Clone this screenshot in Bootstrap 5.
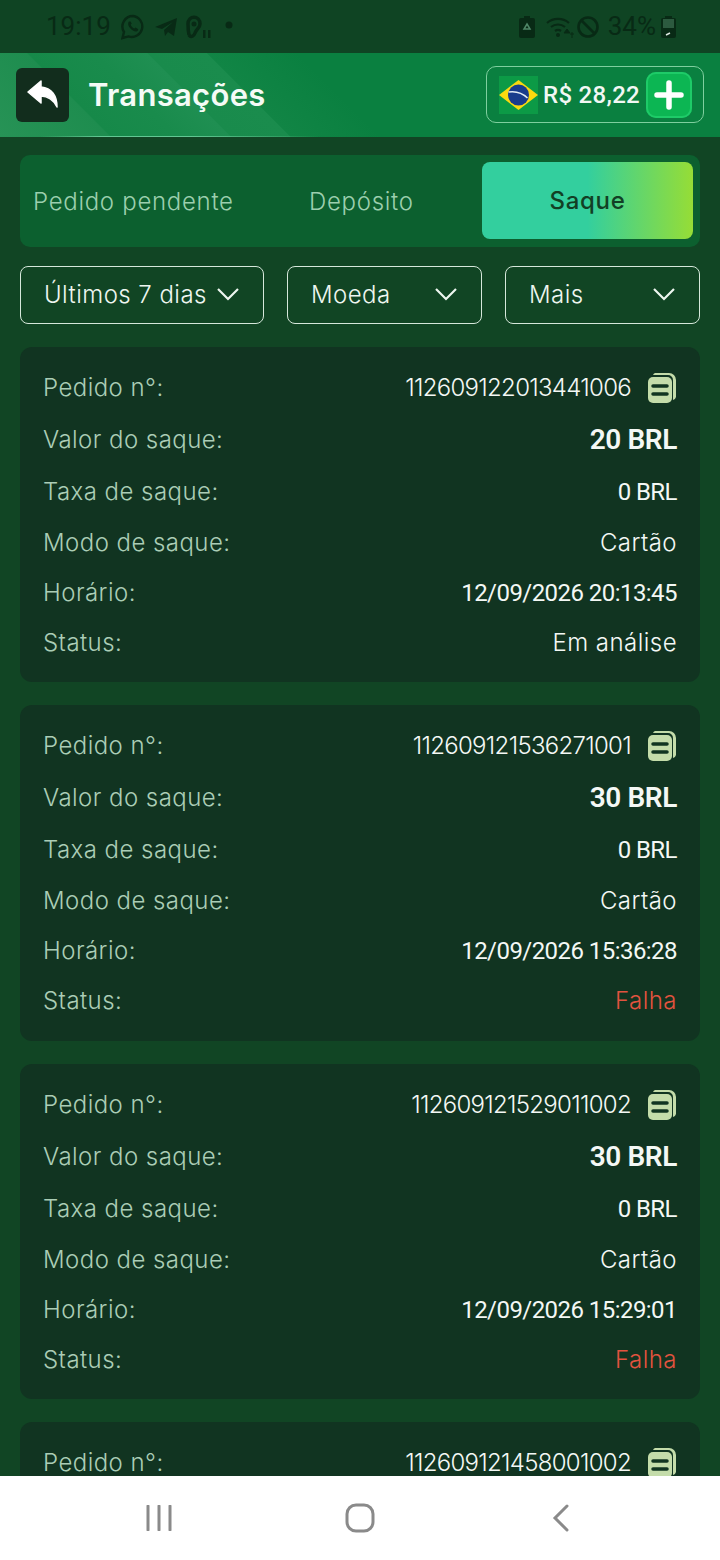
<!DOCTYPE html>
<html lang="pt-BR">
<head>
    <meta charset="UTF-8">
    <meta name="viewport" content="width=device-width, initial-scale=1">
    <title>Transações</title>
    <link href="https://cdn.jsdelivr.net/npm/bootstrap@5.3.0/dist/css/bootstrap.min.css" rel="stylesheet">
    <style>
        html, body { height: 1560px; overflow: hidden; }
        body { background: #114524; font-family: Inter, "Noto Sans", sans-serif; }
        .app-shell { height: 1560px; overflow: hidden; }
        .status-strip { height: 53px; background: #0f4423; padding: 0 44px 0 46px; color: #082a15; font-family: Roboto, sans-serif; font-size: 26px; }
        .status-strip svg { display: block; }
        .top-head { height: 84px; padding: 0 16px; background:
            linear-gradient(90deg, transparent 40px, #62c793 100px, #62c793 190px, transparent 320px) left bottom / 100% 1px no-repeat,
            linear-gradient(45deg, #279356 0, #1e8d4f 78px, #168949 79px, #198b4c 125px, #1f8f52 163px, #198b4c 164px, #1a8c4d 205px, #118545 206px, #0a8040 270px, #0a8040 100%); }
        .back-box { width: 53px; height: 54px; background: #122d1d; border-radius: 6px; }
        .head-title { font-size: 31px; font-weight: 600; color: #f4fbf6; margin-left: 19px; letter-spacing: .3px; }
        .wallet { width: 218px; height: 57px; margin-bottom: 1px; border: 1px solid #7fcf9f; border-radius: 10px; padding: 0 11px 0 12px; }
        .wallet-val { font-family: Roboto, sans-serif; font-weight: 500; font-size: 24px; color: #f2f8f4; margin-left: 5px; letter-spacing: .3px; }
        .plus-box { width: 46px; height: 46px; border-radius: 10px; background: #0cb653; box-shadow: inset 0 0 0 2px #1ecb68; margin-left: auto; }
        .list-area { padding: 18px 20px 0; }
        .tab-strip { height: 92px; background: #0c602f; border-radius: 10px; padding: 7px 7px 8px 13px; }
        .tab-item { font-size: 24px; font-weight: 300; color: #9ccfae; letter-spacing: .7px; }
        .tab-off { padding-top: 2px; }
        .tab-one { width: 276px; }
        .tab-on { width: 211px; height: 77px; border-radius: 8px; background: linear-gradient(90deg, #33cf9e 0, #33cf9e 50%, #96dd36 100%); color: #123f25; font-weight: 500; }
        .drop-row { margin-top: 19px; gap: 23px; }
        .drop-box { height: 58px; border: 1px solid #d6e8db; border-radius: 8px; padding: 0 23px; color: #eef6f0; font-size: 24px; font-weight: 300; letter-spacing: .45px; background: transparent; }
        .drop-first { width: 244px; }
        .drop-other { width: 195px; }
        .drop-box svg { margin-top: -3px; }
        .tx-card { height: 335.4px; margin-top: 23px; background: #113421; border-radius: 12px; border: 0; padding: 15px 23px 0; color: #f4f8f5; }
        .tx-line { height: 50px; font-size: 24px; font-weight: 300; letter-spacing: .45px; }
        .tx-line.tall { height: 52px; }
        .tx-lab { color: #abcdb6; }
        .tx-id { letter-spacing: -.7px; }
        .tx-num { font-family: Roboto, sans-serif; font-weight: 400; font-size: 24px; letter-spacing: -.55px; }
        .tx-big { font-family: Roboto, sans-serif; font-weight: 600; font-size: 28px; letter-spacing: -.4px; }
        .tx-fail { color: #e2533f; }
        .bottom-nav { height: 84px; background: #fff; flex-shrink: 0; }
        .nav-slot { width: 201px; }
    </style>
</head>
<body>
<div class="app-shell d-flex flex-column">

    <div class="status-strip d-flex align-items-center justify-content-between flex-shrink-0">
        <div class="d-flex align-items-center">
            <span>19:19</span>
            <svg width="24" height="26" viewBox="0 0 24 26" style="margin-left:10px"><path d="M12 2a10.500 10.500 0 0 0-9 16l-1.500 6 6-1.600A10.500 10.500 0 1 0 12 2z" fill="none" stroke="#082a15" stroke-width="2.400"/><path d="M8 7.500c-1.500 1.500-1 4 1 6.500s5 4 6.500 3.500 2-2 1.500-2.500l-2.500-1.500-1.200 1c-1.500-.5-3-2.200-3.600-3.800l1-1.200L9.500 7.500z" fill="#082a15"/></svg>
            <svg width="24" height="22" viewBox="0 0 24 22" style="margin-left:9px"><path d="M1 11 23 2l-3 18-6-4-3 4-1-6 9-8-11 7z" fill="#082a15"/></svg>
            <svg width="26" height="26" viewBox="0 0 26 26" style="margin-left:7px"><path d="M4 21c2 3 5 1 6-2 1-4 5-5 5-9 0-9-12-9-12 0 0 3 0 6 1 11" fill="none" stroke="#082a15" stroke-width="3.500"/><circle cx="9" cy="10" r="2.500" fill="#082a15"/><rect x="18" y="16" width="2.500" height="8" fill="#082a15"/><rect x="23" y="16" width="2.500" height="8" fill="#082a15"/></svg>
            <svg width="8" height="8" style="margin-left:14px;margin-top:-4px"><circle cx="4" cy="4" r="3.500" fill="#082a15"/></svg>
        </div>
        <div class="d-flex align-items-center">
            <svg width="16" height="22" viewBox="0 0 16 22"><path d="M5 0h6v2h3a2 2 0 0 1 2 2v16a2 2 0 0 1-2 2H2a2 2 0 0 1-2-2V4a2 2 0 0 1 2-2h3z" fill="#082a15"/><path d="M8 8l3 5H5z" fill="none" stroke="#4f8767" stroke-width="1.500"/></svg>
            <svg width="30" height="24" viewBox="0 0 30 24" style="margin-left:11px"><path d="M1 8a17 17 0 0 1 22 0M5 12a11 11 0 0 1 14 0M9 16a5 5 0 0 1 6 0" fill="none" stroke="#082a15" stroke-width="2.200"/><circle cx="12" cy="20" r="2" fill="#082a15"/><path d="M21 14l3 4h-6zM26 17v6M24 19h4" stroke="#082a15" fill="#082a15" stroke-width="1"/></svg>
            <svg width="24" height="24" viewBox="0 0 24 24"><circle cx="12" cy="12" r="9.500" fill="none" stroke="#082a15" stroke-width="2.600"/><path d="M5 5l14 14" stroke="#082a15" stroke-width="2.600"/></svg>
            <span style="margin-left:8px">34%</span>
            <svg width="15" height="22" viewBox="0 0 15 22" style="margin-left:5px"><path d="M4 0h7v2h2a2 2 0 0 1 2 2v16a2 2 0 0 1-2 2H2a2 2 0 0 1-2-2V4a2 2 0 0 1 2-2h2z" fill="#082a15"/><path d="M2 3h11v9H2z" fill="#2c5a3f"/><path d="M5 19l4-2" stroke="#dfe9e2" stroke-width="1.500"/></svg>
        </div>
    </div>

    <div class="top-head d-flex align-items-center flex-shrink-0">
        <div class="back-box d-flex align-items-center justify-content-center">
            <svg width="32" height="30" viewBox="0 0 32 30"><path d="M14 1 1 12l13 11v-7c7 0 12 3 16 11 0-11-5-19-16-20z" fill="#fff" stroke="#fff" stroke-linejoin="round" stroke-width="1.500"/></svg>
        </div>
        <div class="head-title">Transações</div>
        <div class="wallet d-flex align-items-center ms-auto">
            <svg width="39" height="38" viewBox="0 0 39 38" class="flex-shrink-0"><rect width="39" height="38" fill="#0c9a46"/><path d="M19.500 4 39 19 19.500 34 0 19z" fill="#fbd90f"/><circle cx="19.500" cy="19" r="10.500" fill="#1a3c8c"/><path d="M9.500 16c7-1 14 1 19 6" fill="none" stroke="#e5edf5" stroke-width="1.500"/></svg>
            <span class="wallet-val">R$ 28,22</span>
            <div class="plus-box d-flex align-items-center justify-content-center flex-shrink-0">
                <svg width="30" height="30" viewBox="0 0 30 30"><path d="M15 3v24M3 15h24" stroke="#fff" stroke-width="5.500" stroke-linecap="round"/></svg>
            </div>
        </div>
    </div>

    <div class="list-area flex-grow-1 overflow-hidden">
        <div class="tab-strip d-flex align-items-center">
            <div class="tab-item tab-off tab-one">Pedido pendente</div>
            <div class="tab-item tab-off">Depósito</div>
            <div class="tab-item tab-on ms-auto flex-shrink-0 d-flex align-items-center justify-content-center">Saque</div>
        </div>

        <div class="drop-row d-flex">
            <div class="drop-box drop-first d-flex align-items-center justify-content-between">
                <span>Últimos 7 dias</span>
                <svg width="24" height="14" viewBox="0 0 24 14"><path d="M2 2l10 10L22 2" fill="none" stroke="#eef6f0" stroke-width="2.200"/></svg>
            </div>
            <div class="drop-box drop-other d-flex align-items-center justify-content-between">
                <span>Moeda</span>
                <svg width="24" height="14" viewBox="0 0 24 14"><path d="M2 2l10 10L22 2" fill="none" stroke="#eef6f0" stroke-width="2.200"/></svg>
            </div>
            <div class="drop-box drop-other d-flex align-items-center justify-content-between">
                <span>Mais</span>
                <svg width="24" height="14" viewBox="0 0 24 14"><path d="M2 2l10 10L22 2" fill="none" stroke="#eef6f0" stroke-width="2.200"/></svg>
            </div>
        </div>

        <div id="txList"></div>
    </div>

    <div class="bottom-nav d-flex align-items-center justify-content-center">
        <div class="nav-slot d-flex justify-content-center">
            <svg width="28" height="26" viewBox="0 0 28 26"><path d="M3 1v24M14 1v24M25 1v24" stroke="#8a8a8a" stroke-width="3" stroke-linecap="round"/></svg>
        </div>
        <div class="nav-slot d-flex justify-content-center">
            <svg width="30" height="30" viewBox="0 0 30 30"><rect x="2" y="2" width="26" height="26" rx="9" fill="none" stroke="#8a8a8a" stroke-width="3"/></svg>
        </div>
        <div class="nav-slot d-flex justify-content-center">
            <svg width="18" height="28" viewBox="0 0 18 28"><path d="M15 2 3 14l12 12" fill="none" stroke="#8a8a8a" stroke-width="3" stroke-linecap="round"/></svg>
        </div>
    </div>
</div>

<script src="https://cdn.jsdelivr.net/npm/bootstrap@5.3.0/dist/js/bootstrap.bundle.min.js"></script>
<script>
    const transacoes = [
        { id: "112609122013441006", valor: "20 BRL", hora: "12/09/2026 20:13:45", status: "Em análise", falha: false },
        { id: "112609121536271001", valor: "30 BRL", hora: "12/09/2026 15:36:28", status: "Falha", falha: true },
        { id: "112609121529011002", valor: "30 BRL", hora: "12/09/2026 15:29:01", status: "Falha", falha: true },
        { id: "112609121458001002", valor: "30 BRL", hora: "12/09/2026 14:58:00", status: "Falha", falha: true }
    ];
    const copyIcon = `<svg width="30" height="32" viewBox="0 0 30 32" class="ms-3 flex-shrink-0"><path d="M8 1h14a7 7 0 0 1 7 7v17a4 4 0 0 1-3 3V8a5 5 0 0 0-5-5H6a4 4 0 0 1 2-2z" fill="#c4dcaa"/><rect x="1" y="5" width="24" height="26" rx="5" fill="#c4dcaa"/><path d="M6 14h14M6 22h14" stroke="#113421" stroke-width="3.500" stroke-linecap="round"/></svg>`;
    document.getElementById("txList").innerHTML = transacoes.map(t => `
        <div class="card tx-card">
            <div class="tx-line tall d-flex align-items-center justify-content-between">
                <span class="tx-lab">Pedido n°:</span>
                <span class="d-flex align-items-center"><span class="tx-id">${t.id}</span>${copyIcon}</span>
            </div>
            <div class="tx-line tall d-flex align-items-center justify-content-between">
                <span class="tx-lab">Valor do saque:</span><span class="tx-big">${t.valor}</span>
            </div>
            <div class="tx-line tall d-flex align-items-center justify-content-between">
                <span class="tx-lab">Taxa de saque:</span><span class="tx-num">0 BRL</span>
            </div>
            <div class="tx-line d-flex align-items-center justify-content-between">
                <span class="tx-lab">Modo de saque:</span><span>Cartão</span>
            </div>
            <div class="tx-line d-flex align-items-center justify-content-between">
                <span class="tx-lab">Horário:</span><span class="tx-num">${t.hora}</span>
            </div>
            <div class="tx-line d-flex align-items-center justify-content-between">
                <span class="tx-lab">Status:</span><span class="${t.falha ? "tx-fail" : ""}">${t.status}</span>
            </div>
        </div>`).join("");
</script>
</body>
</html>
